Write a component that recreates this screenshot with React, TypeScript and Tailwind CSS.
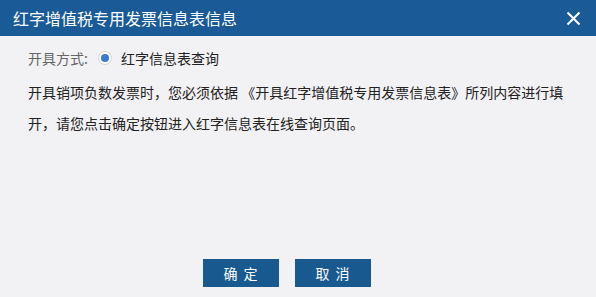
const FONT = { fontFamily: '"Microsoft YaHei", "Noto Sans CJK SC", sans-serif' }

export default function App() {
  return (
    <div className="w-[596px] h-[297px] flex flex-col bg-[#f2f1f4] overflow-hidden" style={FONT}>
      <div className="h-9 bg-[#1a5a96] flex items-center justify-between pl-[13px] pr-[15px]">
        <span className="text-white text-[16px]">红字增值税专用发票信息表信息</span>
        <svg width="15" height="15" viewBox="0 0 15 15" className="text-white">
          <path d="M1.5 1.5 L13.5 13.5 M13.5 1.5 L1.5 13.5" stroke="currentColor" strokeWidth="2" />
        </svg>
      </div>

      <div className="flex-1 flex flex-col pl-[28px] pr-4 pt-[13px]">
        <div className="flex items-center h-[18px] text-[14px]">
          <span className="text-[#666]">开具方式:</span>
          <span className="ml-[10px] w-[14px] h-[14px] rounded-full border border-[#d5d5d8] bg-white flex items-center justify-center">
            <span className="w-[8px] h-[8px] rounded-full bg-[#3a7bd5]" />
          </span>
          <span className="ml-[9px] text-[#222]">红字信息表查询</span>
        </div>

        <p className="mt-[10px] text-[14px] leading-[31px] text-[#222]">
          开具销项负数发票时，您必须依据 《开具红字增值税专用发票信息表》所列内容进行填
          <br />
          开，请您点击确定按钮进入红字信息表在线查询页面。
        </p>

        <div className="mt-auto mb-[10px] flex justify-center gap-4 pr-[35px]">
          <button className="w-[76px] h-[28px] bg-[#185a90] text-white text-[14px] tracking-[6px] pl-[6px]">
            确定
          </button>
          <button className="w-[76px] h-[28px] bg-[#185a90] text-white text-[14px] tracking-[6px] pl-[6px]">
            取消
          </button>
        </div>
      </div>
    </div>
  )
}
